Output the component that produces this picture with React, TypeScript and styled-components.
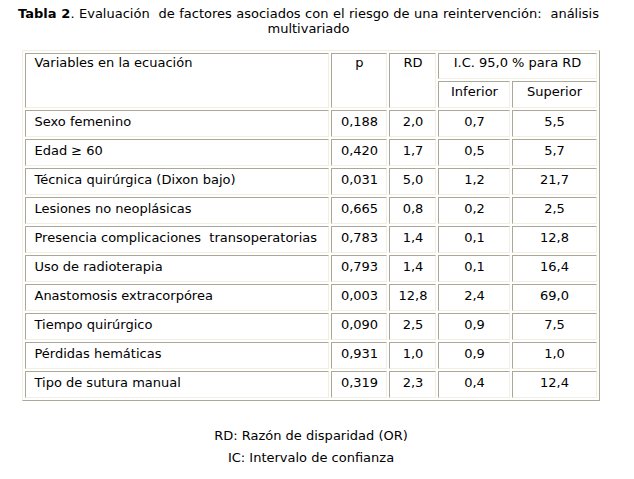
import React from "react";
import styled, { createGlobalStyle } from "styled-components";

const GlobalStyle = createGlobalStyle`
  body {
    margin: 0;
    background: #ffffff;
    color: #000000;
    font-family: "DejaVu Sans", Verdana, sans-serif;
    font-size: 13px;
  }
`;

const Page = styled.div`
  width: 606px;
  padding: 6px 0 0 8px;
`;

// line 1 is stretched edge to edge, the last line sits centred
const Title = styled.div`
  text-align: justify;
  text-align-last: center;
  line-height: 15px;
  padding: 0 15px 0 10px;
`;

const Table = styled.table`
  width: 577px;
  margin: 14px auto 0;
  table-layout: fixed;
  border-collapse: separate;
  border-spacing: 2px;
  border: 1px solid;
  border-color: #f1efe2 #aca899 #aca899 #f1efe2;
`;

const Col = styled.col<{ $w: number }>`
  width: ${(p) => p.$w}px;
`;

const Cell = styled.td<{ $left?: boolean; $pad?: string }>`
  box-sizing: border-box;
  border: 1px solid;
  border-color: #aca899 #f1efe2 #f1efe2 #aca899;
  padding: ${(p) => p.$pad ?? "3px 4px 7px"};
  padding-left: ${(p) => (p.$left ? "8px" : "4px")};
  line-height: 15px;
  text-align: ${(p) => (p.$left ? "left" : "center")};
  vertical-align: top;
  white-space: nowrap;
`;

const Notes = styled.div`
  margin-top: 27px;
  display: flex;
  flex-direction: column;
  align-items: center;
  gap: 7px;
  line-height: 15px;
`;

const rows = [
  ["Sexo femenino", "0,188", "2,0", "0,7", "5,5"],
  ["Edad \u2265 60", "0,420", "1,7", "0,5", "5,7"],
  ["T\u00e9cnica quir\u00fargica (Dixon bajo)", "0,031", "5,0", "1,2", "21,7"],
  ["Lesiones no neopl\u00e1sicas", "0,665", "0,8", "0,2", "2,5"],
  ["Presencia complicaciones\u00a0 transoperatorias", "0,783", "1,4", "0,1", "12,8"],
  ["Uso de radioterapia", "0,793", "1,4", "0,1", "16,4"],
  ["Anastomosis extracorp\u00f3rea", "0,003", "12,8", "2,4", "69,0"],
  ["Tiempo quir\u00fargico", "0,090", "2,5", "0,9", "7,5"],
  ["P\u00e9rdidas hem\u00e1ticas", "0,931", "1,0", "0,9", "1,0"],
  ["Tipo de sutura manual", "0,319", "2,3", "0,4", "12,4"],
];

const HEAD_TOP = "1px 4px 8px";
const HEAD_SUB = "2px 4px 8px";

export default function App() {
  return (
    <Page>
      <GlobalStyle />
      <Title>
        <b>Tabla 2</b>. Evaluación&nbsp; de factores asociados con el riesgo de una
        reintervención:&nbsp; análisis multivariado
      </Title>
      <Table>
        <colgroup>
          <Col $w={304} />
          <Col $w={56} />
          <Col $w={47} />
          <Col $w={72} />
          <Col $w={84} />
        </colgroup>
        <tbody>
          <tr>
            <Cell $left rowSpan={2} $pad={HEAD_TOP}>Variables en la ecuación</Cell>
            <Cell rowSpan={2} $pad={HEAD_TOP}>p</Cell>
            <Cell rowSpan={2} $pad={HEAD_TOP}>RD</Cell>
            <Cell colSpan={2} $pad={HEAD_TOP}>I.C. 95,0 % para RD</Cell>
          </tr>
          <tr>
            <Cell $pad={HEAD_SUB}>Inferior</Cell>
            <Cell $pad={HEAD_SUB}>Superior</Cell>
          </tr>
          {rows.map((r) => (
            <tr key={r[0]}>
              <Cell $left>{r[0]}</Cell>
              <Cell>{r[1]}</Cell>
              <Cell>{r[2]}</Cell>
              <Cell>{r[3]}</Cell>
              <Cell>{r[4]}</Cell>
            </tr>
          ))}
        </tbody>
      </Table>
      <Notes>
        <span>RD: Razón de disparidad (OR)</span>
        <span>IC: Intervalo de confianza</span>
      </Notes>
    </Page>
  );
}
